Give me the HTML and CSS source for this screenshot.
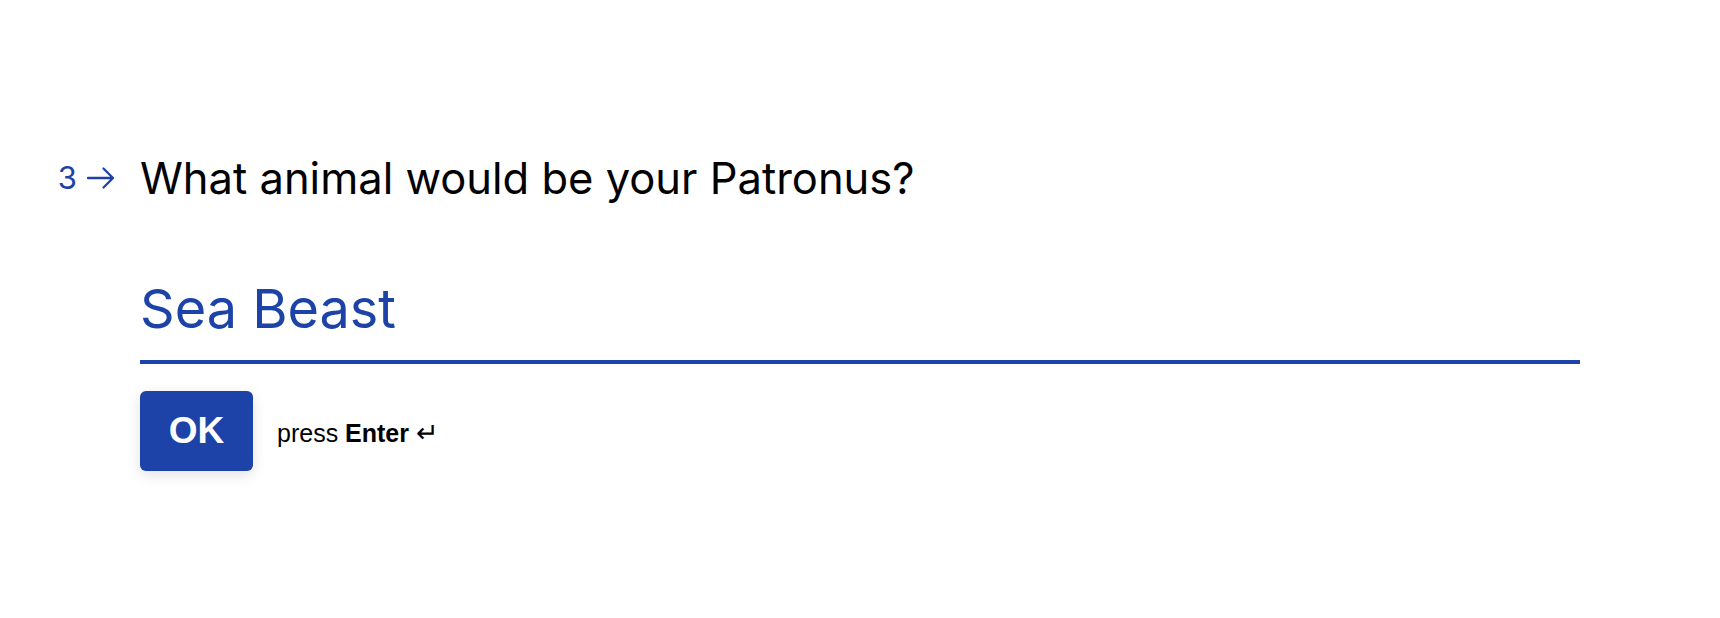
FILE: index.html
```html
<!DOCTYPE html>
<html>
<head>
<meta charset="utf-8">
<link rel="stylesheet" href="styles.css">
</head>
<body>
<main class="page">
  <section class="question">
    <div class="q-head">
      <div class="q-num"><span class="num">3</span><svg class="arrow" viewBox="0 0 30 26" width="30" height="26"><path d="M2 13H27M17.5 3.5l9.5 9.5-9.5 9.5" fill="none" stroke="#1d43a8" stroke-width="2.3" stroke-linecap="round" stroke-linejoin="round"/></svg></div>
      <h1 class="q-title">What animal would be your Patronus?</h1>
    </div>
    <div class="answer">
      <div class="answer-text">Sea Beast</div>
    </div>
    <div class="actions">
      <button class="ok">OK</button>
      <span class="hint">press <b>Enter</b> <span class="enter">↵</span></span>
    </div>
  </section>
</main>
</body>
</html>
```
FILE: styles.css
```css
html, body {
  margin: 0;
  padding: 0;
  background: #ffffff;
}
.page {
  width: 1720px;
  height: 618px;
  padding: 0 140px;
  box-sizing: border-box;
}
.question {
  padding-top: 148px;
}
.q-head {
  position: relative;
}
.q-num {
  position: absolute;
  right: 100%;
  top: 12px;
  margin-right: 24px;
  display: flex;
  align-items: center;
  gap: 9px;
  color: #1d43a8;
  font-family: "Inter", sans-serif;
  font-size: 31px;
  line-height: 36px;
}
.q-title {
  margin: 0;
  font-family: "Inter", sans-serif;
  font-weight: 400;
  font-size: 43.5px;
  line-height: 60px;
  color: #000;
}
.answer {
  margin-top: 69px;
  border-bottom: 4px solid #1d43a8;
  padding-bottom: 19px;
}
.answer-text {
  font-family: "Inter", sans-serif;
  font-size: 54px;
  line-height: 64px;
  color: #1d43a8;
}
.actions {
  margin-top: 27px;
  display: flex;
  align-items: center;
  gap: 24px;
}
.ok {
  width: 113px;
  height: 80px;
  border: none;
  border-radius: 6px;
  background: #1d43a8;
  color: #fff;
  font-family: "Liberation Sans", Arial, sans-serif;
  font-weight: 700;
  font-size: 37px;
  box-shadow: 0 4px 14px rgba(0,0,0,0.12);
  padding: 0;
}
.hint {
  font-family: "Liberation Sans", Arial, sans-serif;
  font-size: 25px;
  color: #000;
  padding-top: 4px;
}
.enter {
  font-size: 27px;
}
```
